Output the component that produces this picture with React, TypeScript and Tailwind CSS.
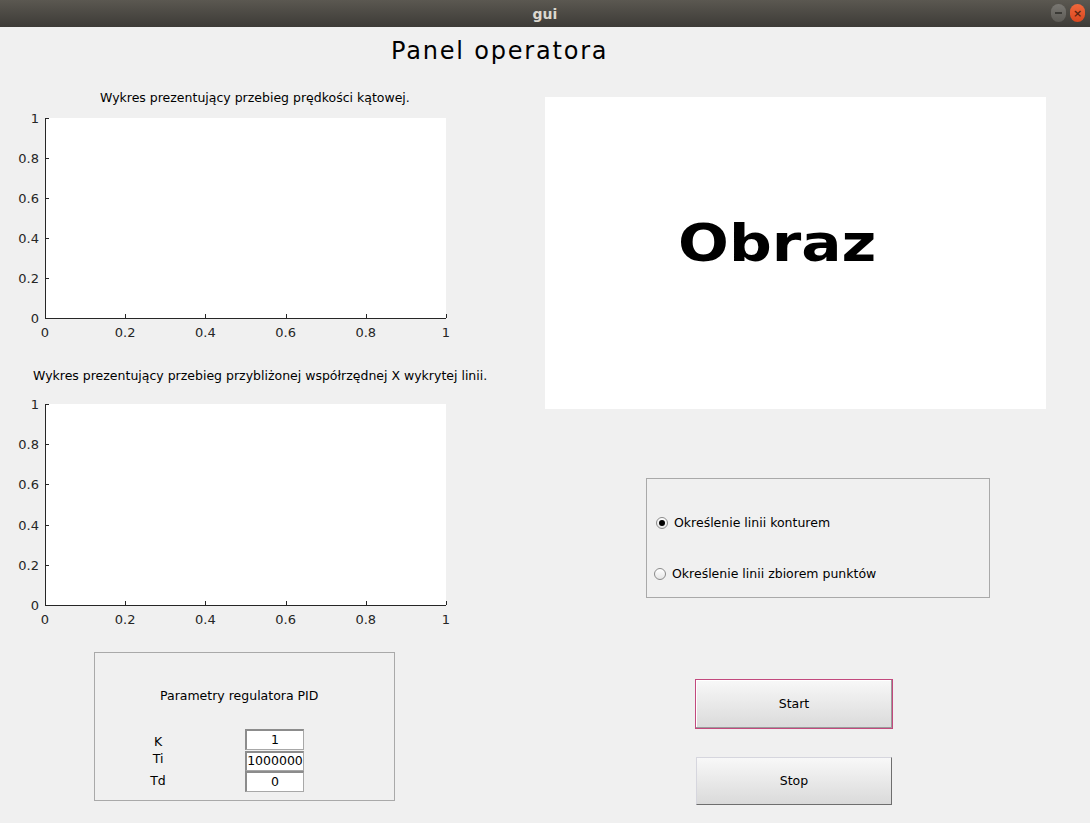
import type { ReactNode } from "react";

const AXIS = "#262626";
const TICKS = ["0", "0.2", "0.4", "0.6", "0.8", "1"];

function Axes({ plotHeight }: { plotHeight: number }) {
  const x0 = 45;
  const x1 = 446;
  const y0 = 8;
  const y1 = y0 + plotHeight;
  const width = x1 - x0;

  return (
    <svg
      width={460}
      height={y1 + 27}
      className="block"
      fontFamily="'DejaVu Sans', sans-serif"
      fontSize={13}
      fill={AXIS}
    >
      <rect x={x0} y={y0} width={width} height={plotHeight} fill="#ffffff" />
      <g stroke={AXIS} strokeWidth={1} shapeRendering="crispEdges">
        <line x1={x0 + 0.5} y1={y0} x2={x0 + 0.5} y2={y1 + 0.5} />
        <line x1={x0} y1={y1 + 0.5} x2={x1} y2={y1 + 0.5} />
        {TICKS.map((_, i) => {
          const y = Math.round(y1 - (i * plotHeight) / 5) + 0.5;
          const x = Math.round(x0 + (i * width) / 5) + 0.5;
          return (
            <g key={i}>
              <line x1={x0} y1={y} x2={x0 + 4} y2={y} />
              <line x1={x} y1={y1} x2={x} y2={y1 - 4} />
            </g>
          );
        })}
      </g>
      {TICKS.map((label, i) => (
        <text
          key={"y" + i}
          x={39}
          y={y1 - (i * plotHeight) / 5 + 5}
          textAnchor="end"
        >
          {label}
        </text>
      ))}
      {TICKS.map((label, i) => (
        <text
          key={"x" + i}
          x={x0 + (i * width) / 5}
          y={y1 + 19}
          textAnchor="middle"
        >
          {label}
        </text>
      ))}
    </svg>
  );
}

function TitleBar() {
  return (
    <div className="relative flex h-[27px] items-center justify-center bg-gradient-to-b from-[#5b5851] to-[#3d3b37]">
      <span className="text-[14px] font-bold leading-none text-[#dcd8cf]">
        gui
      </span>
      <div className="absolute right-[5px] top-[4px] flex gap-[4px]">
        <span className="flex h-[18px] w-[15px] items-center justify-center rounded-full bg-gradient-to-b from-[#7a7873] to-[#5c5a55]">
          <span className="h-[2px] w-[7px] bg-[#3b3a36]" />
        </span>
        <span className="flex h-[18px] w-[15px] items-center justify-center rounded-full bg-gradient-to-b from-[#f0683c] to-[#d9461e] text-[11px] font-bold leading-none text-[#5a2410]">
          ×
        </span>
      </div>
    </div>
  );
}

function Radio({ checked, label }: { checked?: boolean; label: string }) {
  return (
    <div className="flex h-4 items-center gap-[6px]">
      <span className="flex h-[12px] w-[12px] items-center justify-center rounded-full border border-[#8a8a8a] bg-gradient-to-b from-[#ffffff] to-[#e6e6e6]">
        {checked && <span className="h-[6px] w-[6px] rounded-full bg-black" />}
      </span>
      <span className="leading-4">{label}</span>
    </div>
  );
}

function Field({ children, className }: { children: ReactNode; className: string }) {
  return (
    <div
      className={
        "flex w-[59px] items-center justify-center border border-t-2 border-l-2 border-t-[#8c8c8c] border-l-[#8c8c8c] border-r-[#a8a8a8] border-b-[#a8a8a8] bg-white leading-none " +
        className
      }
    >
      {children}
    </div>
  );
}

export default function App() {
  return (
    <div className="h-[823px] w-[1090px] overflow-hidden bg-[#f0f0f0] font-['DejaVu_Sans',sans-serif] text-[12.5px] text-black">
      <TitleBar />
      <h1 className="pl-[391px] pt-[12px] text-[24px] leading-[24px] tracking-[1.8px]">
        Panel operatora
      </h1>

      <div className="flex">
        {/* left column: charts + PID */}
        <div className="w-[545px] shrink-0">
          <p className="mt-[27px] pl-[100px] leading-4">
            Wykres prezentujący przebieg prędkości kątowej.
          </p>
          <div className="mt-[4px]">
            <Axes plotHeight={200} />
          </div>

          <p className="mt-[23px] pl-[33px] leading-4">
            Wykres prezentujący przebieg przybliżonej współrzędnej X wykrytej
            linii.
          </p>
          <div className="mt-[12px]">
            <Axes plotHeight={201} />
          </div>

          <div className="ml-[94px] mt-[20px] h-[149px] w-[301px] border border-[#a9a9a9]">
            <p className="pl-[65px] pt-[35px] leading-4">
              Parametry regulatora PID
            </p>
            <div className="mt-[25px] flex">
              <div className="ml-[48px] w-[30px] text-center">
                <p className="mt-[5px] leading-4">K</p>
                <p className="mt-[1px] leading-4">Ti</p>
                <p className="mt-[6px] leading-4">Td</p>
              </div>
              <div className="ml-[72px] flex flex-col">
                <Field className="h-[21px]">1</Field>
                <Field className="mt-[1px] h-[20px]">1000000</Field>
                <Field className="h-[21px]">0</Field>
              </div>
            </div>
          </div>
        </div>

        {/* right column: image, mode selection, buttons */}
        <div className="flex-1">
          <div className="mt-[34px] flex h-[312px] w-[501px] items-center justify-center bg-white pb-[20px] pr-[36px]">
            <span className="inline-block scale-x-[1.15] text-[52px] font-bold leading-none">
              Obraz
            </span>
          </div>

          <div className="ml-[101px] mt-[69px] h-[120px] w-[344px] border border-[#a9a9a9]">
            <div className="ml-[9px] mt-[36px]">
              <Radio checked label="Określenie linii konturem" />
            </div>
            <div className="ml-[7px] mt-[35px]">
              <Radio label="Określenie linii zbiorem punktów" />
            </div>
          </div>

          <button className="ml-[150px] mt-[81px] block h-[50px] w-[198px] border border-[#c2497d] bg-gradient-to-b from-[#f8f8f8] to-[#dadada] shadow-[inset_-1px_-1px_0_#9a9a9a,inset_1px_1px_0_#ffffff]">
            Start
          </button>
          <button className="ml-[151px] mt-[28px] block h-[48px] w-[196px] border border-t-[#d6d6de] border-l-[#d6d6de] border-r-[#6e6e6e] border-b-[#6e6e6e] bg-gradient-to-b from-[#f8f8f8] to-[#dadada]">
            Stop
          </button>
        </div>
      </div>
    </div>
  );
}
